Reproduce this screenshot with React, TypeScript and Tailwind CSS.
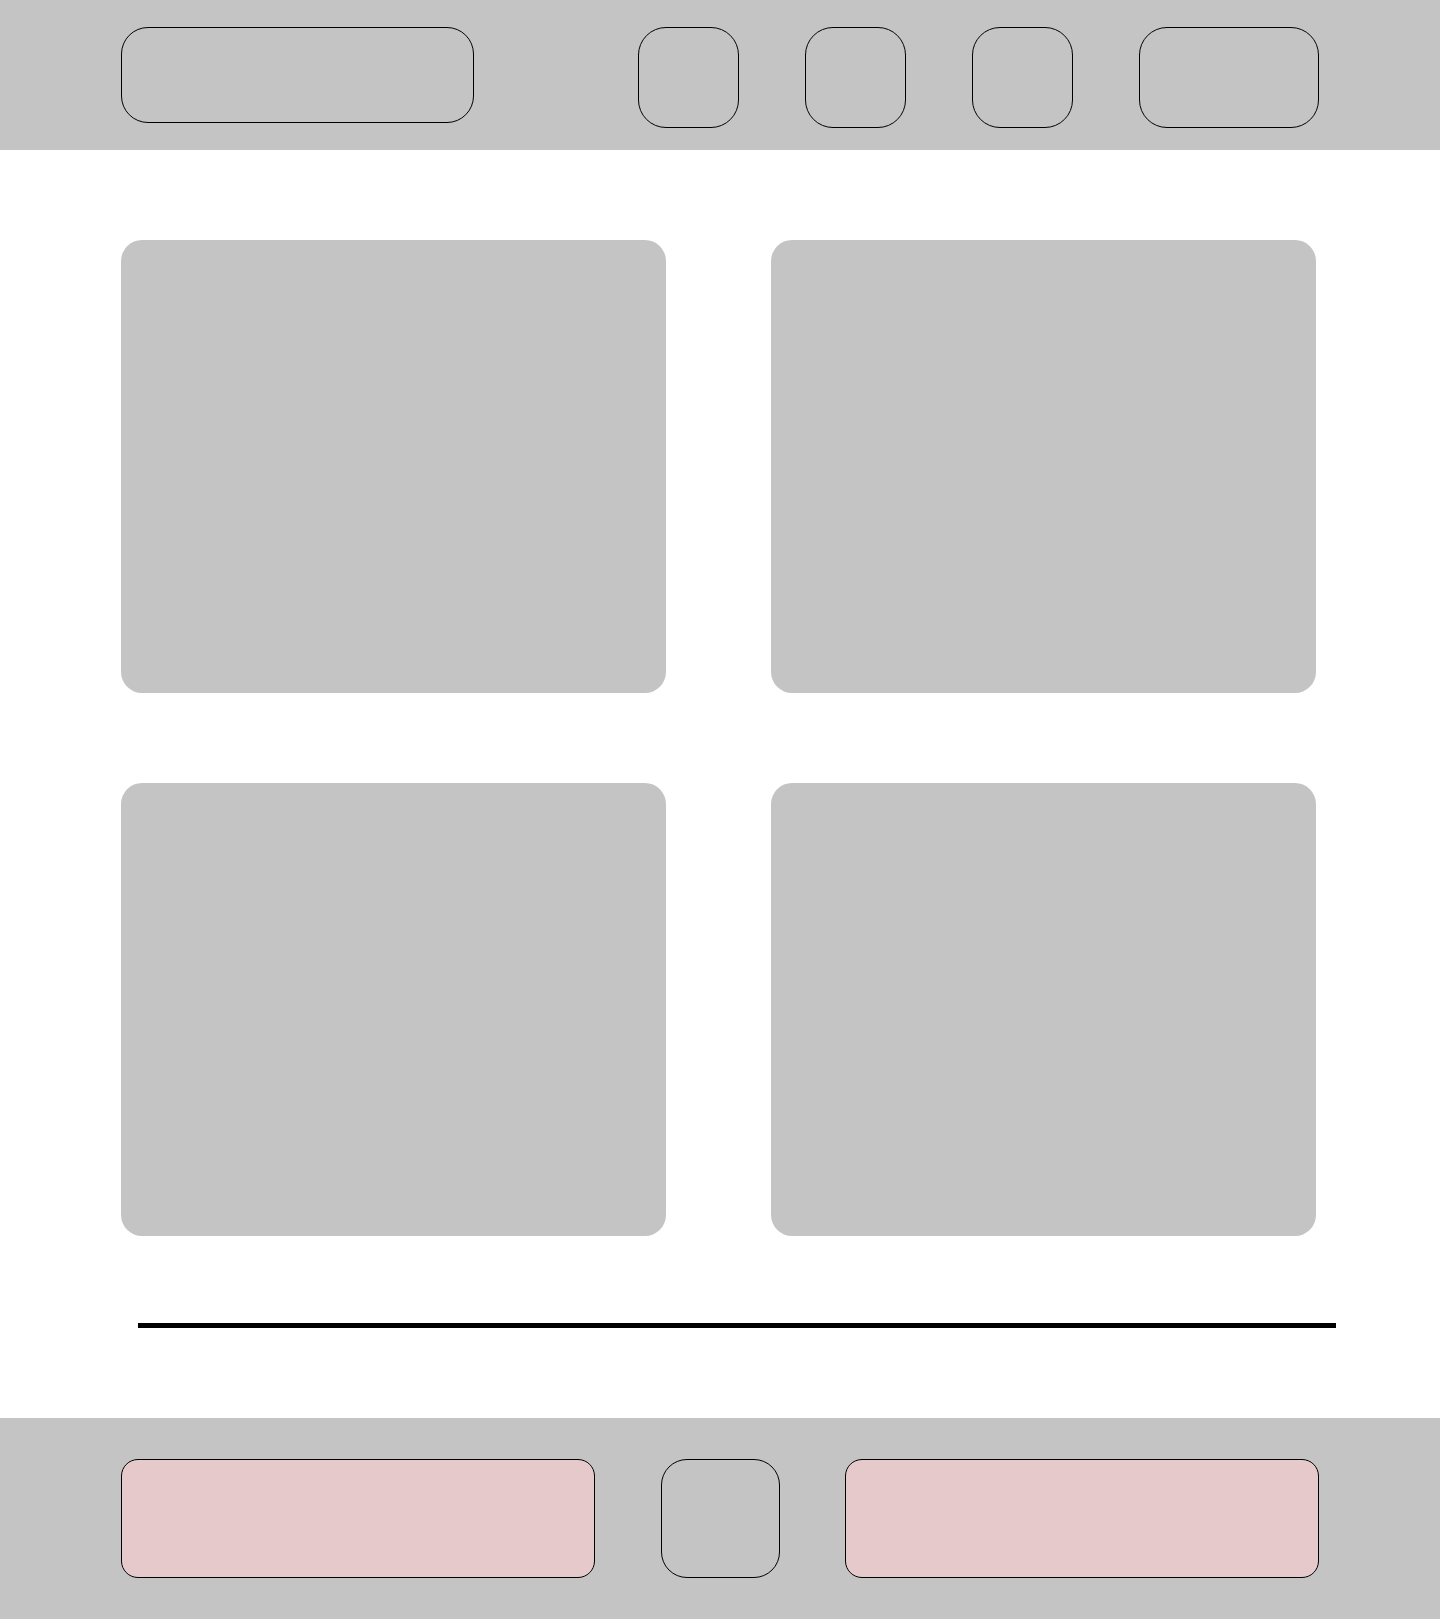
export default function App() {
  return (
    <div className="w-[1440px] min-h-[1619px] bg-white flex flex-col">
      <header className="h-[150px] bg-[#c4c4c4] shrink-0">
        <div className="ml-[121px] w-[1198px] pt-[27px] flex items-start justify-between">
          <div className="w-[353px] h-[96px] rounded-[27px] border border-black" />
          <div className="flex gap-[66px]">
            <div className="w-[101px] h-[101px] rounded-[28px] border border-black" />
            <div className="w-[101px] h-[101px] rounded-[28px] border border-black" />
            <div className="w-[101px] h-[101px] rounded-[28px] border border-black" />
            <div className="w-[180px] h-[101px] rounded-[28px] border border-black" />
          </div>
        </div>
      </header>

      <main className="flex-1 pt-[90px]">
        <div className="ml-[121px] w-[1195px] grid grid-cols-[545px_545px] justify-between gap-y-[90px]">
          {[0, 1, 2, 3].map(i => (
            <div key={i} className="h-[453px] rounded-[21px] bg-[#c4c4c4]" />
          ))}
        </div>
        <div className="ml-[138px] w-[1198px] h-[5px] bg-black mt-[87px]" />
      </main>

      <footer className="h-[201px] bg-[#c4c4c4] shrink-0">
        <div className="ml-[121px] w-[1198px] pt-[41px] flex items-start justify-between">
          <div className="w-[474px] h-[119px] rounded-[17px] border border-black bg-[#e6c9ca]" />
          <div className="w-[119px] h-[119px] rounded-[26px] border border-black" />
          <div className="w-[474px] h-[119px] rounded-[17px] border border-black bg-[#e6c9ca]" />
        </div>
      </footer>
    </div>
  );
}
